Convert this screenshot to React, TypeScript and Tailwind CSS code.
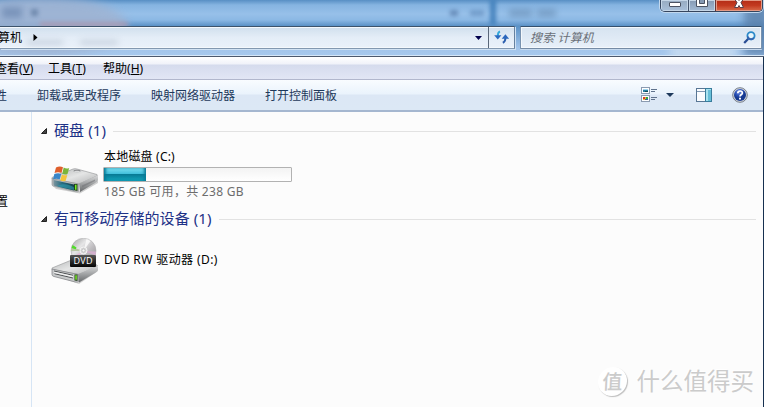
import React from "react";

const commands = ["卸载或更改程序", "映射网络驱动器", "打开控制面板"];

const menus = [
  { label: "查看", accessKey: "V", className: "-ml-[5px] w-[53px]" },
  { label: "工具", accessKey: "T", className: "w-[55px]" },
  { label: "帮助", accessKey: "H", className: "w-[60px]" },
];

const WindowButtons = () => <div className="relative z-10 ml-auto mr-[1px] flex h-[12px] w-[103px] overflow-hidden rounded-b-[5px] border border-t-0 border-[#35455e] shadow-[0_0_0_1px_#c2d8ee]">
    <div className="flex w-[28px] justify-center border-r border-[#43536b] bg-gradient-to-b from-[#96aac0] to-[#a9c0da] shadow-[inset_0_0_0_1px_#c5d6e7]">
      <span className="mt-[2px] h-[5px] w-[12px] rounded-[1px] border border-[#4c5363] bg-white" />
    </div>
    <div className="flex w-[27px] justify-center border-r border-[#6a3434] bg-gradient-to-b from-[#8599b3] to-[#a3bad4] shadow-[inset_0_0_0_1px_#c5d6e7]">
      <svg width="12" height="8" viewBox="0 0 12 8">
        <path d="M.5-3h11V6.500H.5z" fill="#fff" stroke="#4c5363" />
        <path d="M3.500-1h5V3.500h-5z" fill="#8599b3" stroke="#4c5363" />
      </svg>
    </div>
    <div className="flex flex-1 justify-center bg-gradient-to-b from-[#b32b16] via-[#c33a20] to-[#d96a4a] shadow-[inset_0_0_0_1px_#e39a86]">
      <svg width="14" height="9" viewBox="0 0 14 9">
        <path d="M2.500 7.500 5 2.500 2.500-1H6L7 .5 8-1h3.500L9 2.500l2.500 5H8L7 5.500 6 7.500z" fill="#fff" stroke="#5a414b" />
      </svg>
    </div>
  </div>;

const RefreshIcon = () => <svg width="16" height="16" viewBox="0 0 16 16">
    <path d="M6 1.500C4.200 2 3.800 3.500 3.800 6" fill="none" stroke="#35aadb" strokeWidth="2" />
    <path d="M.2 5.300h7.200L3.800 9.500z" fill="#2c6bc0" />
    <path d="M11.400 7.500c0 3-.6 4.500-2.600 5.300" fill="none" stroke="#2c5fae" strokeWidth="2" />
    <path d="M7.700 8.800h7.400L11.400 4.300z" fill="#2a67bd" />
  </svg>;

const SearchIcon = () => <svg width="13" height="13" viewBox="0 0 13 13">
    <path d="M5.500 7.500 1.200 12" stroke="#294d94" strokeWidth="2.200" />
    <circle cx="8" cy="4.700" r="3.600" fill="#e7f5fc" stroke="#2a89c9" strokeWidth="1.800" />
    <path d="M4.600 5.500A3.600 3.600 0 0 0 10.800 7" fill="none" stroke="#3564b0" strokeWidth="1.800" />
  </svg>;

const ViewIcon = () => <svg width="17" height="16" viewBox="0 0 17 16" shapeRendering="crispEdges">
    <path d="M.5.500h8v6h-8zM.5 8.500h8v6h-8z" fill="#fff" stroke="#8b9bb0" />
    <path d="M2 2h5v1H2z" fill="#9ed4ee" />
    <path d="M2 3h5v2H2z" fill="#287fa0" />
    <path d="M4 4h3v1H4z" fill="#174b56" />
    <path d="M2 10h2v2H2z" fill="#d83b2d" />
    <path d="M4 10h1v2H4z" fill="#e9b62e" />
    <path d="M5 10h2v2H5z" fill="#36a347" />
    <path d="M2 12h2v1H2z" fill="#eac42e" />
    <path d="M4 12h3v1H4z" fill="#315aa7" />
    <path d="M10 2h6v1h-6zM10 4h4v1h-4zM10 10h6v1h-6zM10 12h4v1h-4z" fill="#5f728c" />
  </svg>;

const PaneIcon = () => <svg width="16" height="14" viewBox="0 0 16 14" shapeRendering="crispEdges">
    <path d="M.5.500h15v13H.5z" fill="#fafcfe" stroke="#587694" />
    <path d="M1 3.500h8" stroke="#8199b3" />
    <path d="M9.500.500h6v13h-6z" fill="#a9e2ef" stroke="#397d9c" />
    <path d="M12 2h3v11h-3z" fill="#67bfd8" />
  </svg>;

const HelpIcon = () => <svg width="16" height="16" viewBox="0 0 16 16">
    <defs>
      <radialGradient id="help" cx=".4" cy=".25">
        <stop offset="0" stopColor="#7894df" />
        <stop offset=".6" stopColor="#2950b7" />
        <stop offset="1" stopColor="#16398f" />
      </radialGradient>
    </defs>
    <circle cx="8" cy="8" r="7.300" fill="#d6d9de" stroke="#777f8b" />
    <circle cx="8" cy="8" r="6" fill="url(#help)" />
    <path d="M5.800 6.300c0-3 4.600-3 4.600-.4C10.400 7.500 8 7.500 8 9.600" fill="none" stroke="#fff" strokeWidth="1.700" />
    <path d="M7 10.800h2v1.800H7z" fill="#fff" />
  </svg>;

// Shared gradients for both drive pictures
const DriveDefs = () => <svg className="absolute h-0 w-0">
    <defs>
      <linearGradient id="top" x1="0" y1="0" x2="1" y2="1">
        <stop offset="0" stopColor="#b5b7b8" />
        <stop offset=".5" stopColor="#e4e5e5" />
        <stop offset="1" stopColor="#b0b1b2" />
      </linearGradient>
      <linearGradient id="side" x1="0" y1="0" x2="0" y2="1">
        <stop offset="0" stopColor="#d8d9da" />
        <stop offset="1" stopColor="#66696b" />
      </linearGradient>
      <linearGradient id="front" x1="0" y1="0" x2="1" y2="0">
        <stop offset="0" stopColor="#7d959e" />
        <stop offset=".4" stopColor="#2a6e83" />
        <stop offset="1" stopColor="#173f4c" />
      </linearGradient>
      <linearGradient id="disc" x1="0" y1="0" x2="1" y2="1">
        <stop offset="0" stopColor="#9d9d9e" />
        <stop offset=".35" stopColor="#e6e6e7" />
        <stop offset=".6" stopColor="#c0bec1" />
        <stop offset="1" stopColor="#8d8d90" />
      </linearGradient>
      <linearGradient id="label" x1="0" y1="0" x2="0" y2="1">
        <stop offset="0" stopColor="#565656" />
        <stop offset=".45" stopColor="#303030" />
        <stop offset="1" stopColor="#050505" />
      </linearGradient>
    </defs>
  </svg>;

const HardDiskIcon = () => <svg width="48" height="28" viewBox="0 0 48 28">
    <path d="M3 21 27 26 47 14v3L29 27.500 5 23z" fill="#cfcfcf" />
    <path d="M1 11.500 22 3q2-.7 4 0L46 8.500q1 .5 0 1.500L28 18 1 13z" fill="url(#top)" stroke="#909294" strokeWidth=".6" />
    <path d="M28 17.500 47 9.500v4.500q-1 2-3 3L29 26z" fill="url(#side)" />
    <path d="M1 12.500 27.500 18v7.500q-1 .5-3 .2L3 20.500q-2-.5-2-2z" fill="#b7babc" stroke="#8d9092" strokeWidth=".6" />
    <path d="M2.500 14 23 18.500v6L3.500 20q-1-.5-1-2z" fill="url(#front)" />
    <path d="M6 20c6-3.500 13-1.500 17 1.500v2.500z" fill="#2f9db0" opacity=".6" />
    <path d="m31 19.500 13-6v1.500l-13 6.500z" fill="#74777a" opacity=".6" />
    <ellipse cx="26" cy="5" rx="3.500" ry="1.200" fill="#8a8c8e" />
    <ellipse cx="26" cy="5.600" rx="3" ry=".9" fill="#dadbdc" />
    <path d="M23 18h3.500v7L23 24.300z" fill="#24431c" />
    <path d="M24 18.800h1.500v5H24z" fill="#75ef24" />
    <path d="M5 1.500q3.500-2 7-.3L10.500 7Q7 5.500 3.500 7z" fill="#df5f2c" />
    <path d="M12.700 1.600q3 1.600 5.500.3L16.500 8q-2.500 1.200-5.300-.3z" fill="#7bb53b" />
    <path d="M3.300 8q3.500-1.500 7-.2L8.700 13.500Q5.500 12 2 13.500z" fill="#3a86c8" />
    <path d="M11 8.500q2.800 1.500 5.300.4L14.700 14.800q-2.700 1-5.500-.6z" fill="#f4c53c" />
  </svg>;

const DvdIcon = () => <svg width="48" height="46" viewBox="0 0 48 46">
    <path d="M3 37.500 26 44.500 47 30v3L28 46z" fill="#cfcfcf" />
    <path d="M1 30 23 21q2-.5 4 0l19 6q1 .5 0 1.500L28 36.500 1 31.500z" fill="url(#top)" stroke="#929496" strokeWidth=".6" />
    <path d="M27 36 47 28v4q-1 2-3 3L28 44.500z" fill="url(#side)" />
    <path d="M1 31 27 36.500l.5 7q-1 1-3 .5L3 38.500q-2-.5-2-2z" fill="#c8cacb" stroke="#85878a" strokeWidth=".8" />
    <path d="m3 33 19 4.300M3.500 35.700 22 40" stroke="#505356" strokeWidth="1" />
    <path d="m3.200 34.300 18.800 4.300" stroke="#f2f2f2" strokeWidth="1.200" />
    <path d="M23.500 36.500h3v6.500l-3-.6z" fill="#243f1d" />
    <path d="M24.300 37.200h1.500v4.600h-1.500z" fill="#7aea29" />
    <circle cx="32.500" cy="12.700" r="12.500" fill="url(#disc)" stroke="#a9a9aa" strokeWidth=".5" />
    <path d="m32.500 13-12-4q-.6 2-.5 4z" fill="#b8c7a4" />
    <path d="m32.500 13 12 4.500 .5-4z" fill="#d3b0cd" />
    <path d="m32.500 13-11 6 2 2z" fill="#eab4d8" />
    <path d="m32.500 13 7-10-4-2z" fill="#fff" opacity=".75" />
    <path d="m21.500 7 4 2.500-.8 1.800-4-1.300z" fill="#4fdc2a" />
    <circle cx="32.500" cy="12.500" r="3.500" fill="#d6d6d7" stroke="#f5f5f5" />
    <circle cx="32.500" cy="12.500" r="1.500" fill="#f8f8f8" stroke="#a5a5a5" strokeWidth=".5" />
    <rect x="19" y="17" width="26" height="12" rx="1" fill="url(#label)" />
    <text x="32" y="26.200" textAnchor="middle" fill="#fff" fontSize="9" fontWeight="500" textLength="19" fontFamily="Open Sans, sans-serif">DVD</text>
  </svg>;

const GroupHeader = ({ title }: { title: string }) => <div className="flex h-[20px] items-center pl-[9px] pr-[7px]">
    <svg width="6" height="6" viewBox="0 0 6 6">
      <path d="M5.500.500v5h-5z" fill="#444" stroke="#222" />
    </svg>
    <h2 className="-mt-[2px] ml-[7px] whitespace-nowrap text-[15px] leading-[20px] tracking-[0.08px] text-[#1e3287]">{title}</h2>
    <div className="ml-[7px] h-px flex-1 bg-[#e2e2e2]" />
  </div>;

const App = () => {
  return <div className="flex h-[407px] w-[764px] flex-col overflow-hidden bg-[#fcfcfc] font-['Noto_Sans','Noto_Sans_CJK_SC',sans-serif] text-[12px] text-black">
      <DriveDefs />
      <header className="relative flex h-[57px] shrink-0 flex-col overflow-hidden border-b border-[#4c586c] bg-[#a2c4ea]">
        {/* Blurred window behind the glass frame */}
        <div className="absolute inset-0 bg-[linear-gradient(180deg,#588fc4_0px,#86b4e1_5px,#97c0e9_14px,#8bb8e4_20px,#5a91c6_26px,#a2c4ea_48px,#a6c8ed_56px)]" />
        <div className="absolute -left-12 -top-1 h-[60px] w-[175px] rounded-[50%] bg-[#a0b2d0] opacity-80 blur-[5px]" />
        <div className="absolute left-[40px] top-[22px] h-[5px] w-[88px] bg-[#b391a5] opacity-60 blur-[2px]" />
        <div className="absolute left-[2px] top-[7px] h-[11px] w-[20px] bg-[#6c88b1] opacity-70 blur-[3px]" />
        <div className="absolute left-[31px] top-[9px] h-[7px] w-[7px] bg-[#5c789e] opacity-70 blur-[2px]" />
        <div className="absolute left-[450px] top-[10px] h-[6px] w-[8px] bg-[#496b9b] opacity-60 blur-[2px]" />
        <div className="absolute left-[470px] top-[10px] h-[6px] w-[14px] bg-[#5b86b7] opacity-60 blur-[2px]" />
        <div className="absolute left-[490px] top-0 h-[25px] w-[6px] bg-[#3475b3] opacity-80 blur-[2px]" />
        <div className="absolute left-[509px] top-[9px] h-[8px] w-[23px] bg-[#648ab2] opacity-60 blur-[3px]" />
        <div className="absolute left-[537px] top-[9px] h-[8px] w-[19px] bg-[#648ab2] opacity-60 blur-[3px]" />
        <div className="absolute left-[744px] top-0 h-[56px] w-[26px] bg-[#597faa] opacity-80 blur-[4px]" />
        <div className="absolute left-[670px] top-[46px] h-[12px] w-[66px] bg-[#d3e3f3] opacity-80 blur-[5px]" />
        <div className="absolute inset-x-0 bottom-0 h-px bg-[#d5e6f7]" />

        <div className="flex h-[26px] shrink-0">
          <WindowButtons />
        </div>
        <div className="relative flex h-[23px]">
          <div className="flex w-[515px] border border-t-[#3d536b] border-b-[#8298b0] border-r-[#66819f] border-l-0 bg-gradient-to-b from-[#d0dfed] via-[#e4edf7] to-[#e9f1fa] shadow-[inset_0_1px_0_#f4f8fc,inset_0_-1px_0_#f4f8fc,1px_1px_0_#d0e2f4]">
            <div className="relative flex flex-1 items-center">
              {/* Menu of the window behind shows through the field */}
              <div className="absolute left-[27px] top-[13px] h-[5px] w-[36px] bg-[#a9b6c6] opacity-50 blur-[3px]" />
              <div className="absolute left-[80px] top-[13px] h-[5px] w-[38px] bg-[#a9b6c6] opacity-50 blur-[3px]" />
              <span className="relative -ml-[2px] w-[26px] whitespace-nowrap leading-[18px]">算机</span>
              <svg className="relative ml-[9px]" width="5" height="7" viewBox="0 0 5 7"><path d="M.5 0 4.500 3.500.5 7z" /></svg>
              <svg className="ml-auto mr-[6px]" width="7" height="4" viewBox="0 0 7 4"><path d="M0 0h7L3.500 4z" fill="#00004d" /></svg>
            </div>
            <div className="flex w-[26px] items-center justify-center border-l border-[#596779]">
              <RefreshIcon />
            </div>
          </div>
          <div className="ml-[5px] flex w-[242px] items-center rounded-[1px] border border-t-[#35506d] border-b-[#758ba5] border-x-[#7892af] bg-gradient-to-b from-[#d6e3f0] to-[#e8f0f9] pl-[9px] pr-[5px] shadow-[inset_0_0_0_1px_#f4f8fc,0_1px_0_#c6daef]">
            <span className="text-[12px] italic tracking-[0.15px] text-[#6a7078]">搜索 计算机</span>
            <span className="ml-auto"><SearchIcon /></span>
          </div>
        </div>
      </header>

      <div className="flex min-h-0 flex-1 flex-col border-r border-[#16304f]">
        <nav className="flex h-[23px] shrink-0 items-center border-b border-[#b2b7cd] bg-[linear-gradient(180deg,#ffffff_0px,#f0f2f9_7px,#d5dbed_8px,#e2e6f5_22px)] pt-[2px]">
          {menus.map(menu => <span key={menu.label} className={`${menu.className} shrink-0 whitespace-nowrap`}>
              {menu.label}(<span className="underline underline-offset-1">{menu.accessKey}</span>)
            </span>)}
        </nav>
        <div className="flex h-[32px] shrink-0 items-center border-b-2 border-b-[#a5b7d0] bg-[linear-gradient(180deg,#f9fcff_0px,#eaf3fc_14px,#dce7f5_15px,#dce8f5_28px)] text-[#1e395b]">
          <span className="-ml-[5px] mt-[2px] w-[42px]">性</span>
          <div className="mt-[2px] flex gap-[30px]">
            {commands.map(command => <span key={command} className="whitespace-nowrap">{command}</span>)}
          </div>
          <div className="ml-auto flex items-center pr-[15px]">
            <ViewIcon />
            <svg className="ml-[8px]" width="8" height="4" viewBox="0 0 8 4"><path d="M0 0h8L4 4z" fill="#1e395b" /></svg>
            <span className="ml-[22px]"><PaneIcon /></span>
            <span className="ml-[20px]"><HelpIcon /></span>
          </div>
        </div>

        <div className="relative flex min-h-0 flex-1">
          <aside className="w-[32px] shrink-0 border-r border-[#d6e5f5] pt-[81px]">
            <span className="-ml-[4px] block leading-[18px]">置</span>
          </aside>
          <main className="flex-1 pt-[9px]">
            <GroupHeader title="硬盘 (1)" />
            <div className="flex h-[68px] pl-[19px] pt-[7px]">
              <div className="pt-[18px]"><HardDiskIcon /></div>
              <div className="ml-[4px]">
                <div className="pl-px leading-[18px] tracking-[0.2px]">本地磁盘 (C:)</div>
                <div className="mt-[1px] h-[15px] w-[189px] rounded-[1px] border border-[#b2b2b2] bg-gradient-to-b from-[#f3f3f3] to-white">
                  <div className="h-full bg-[linear-gradient(180deg,#7bdff1_0%,#42bfdc_45%,#087b96_50%,#12a5bc_100%)] shadow-[inset_3px_0_3px_-1px_#087b96,inset_-3px_0_3px_-1px_#087b96]" style={{ width: `${(1 - 185 / 238) * 100}%` }} />
                </div>
                <div className="pl-px leading-[20px] tracking-[0.28px] text-[#6d6d6d]">185 GB 可用，共 238 GB</div>
              </div>
            </div>
            <GroupHeader title="有可移动存储的设备 (1)" />
            <div className="flex items-center pl-[19px] pt-[9px]">
              <DvdIcon />
              <span className="-mt-[2px] ml-[5px] tracking-[0.4px]">DVD RW 驱动器 (D:)</span>
            </div>
          </main>
          <div className="absolute bottom-[10px] right-[9px] flex items-center gap-[10px] text-[#cbcbcb] [text-shadow:-1px_-1px_0_#ffffff]">
            <span className="flex h-[29px] w-[29px] -skew-x-3 items-center justify-center rounded-full bg-white text-[20px] font-medium shadow-[1px_1px_1px_#bdbdbd]">值</span>
            <span className="whitespace-nowrap text-[23.500px] leading-[32px]">什么值得买</span>
          </div>
        </div>
      </div>
    </div>;
};
export default App;
